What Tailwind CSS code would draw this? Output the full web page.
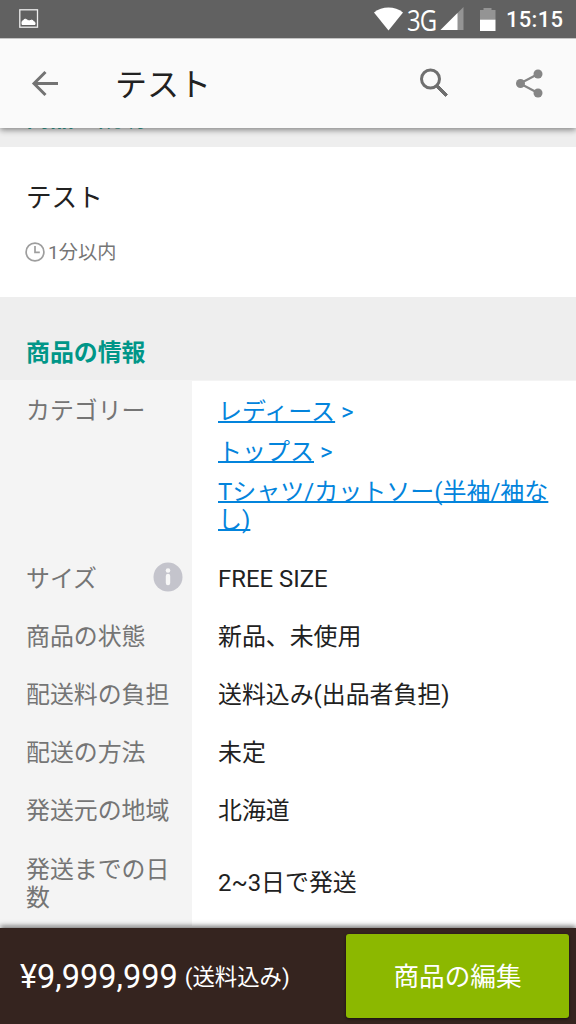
<!DOCTYPE html>
<html lang="ja">
<head>
<meta charset="utf-8">
<title>テスト</title>
<script src="https://cdn.jsdelivr.net/npm/@tailwindcss/browser@4"></script>
</head>
<body class="bg-white">
<div class="relative flex h-[1024px] w-[576px] flex-col overflow-hidden bg-white font-[Roboto,'Noto_Sans_CJK_JP',sans-serif] text-[23.900px] leading-[28px] text-[#212121]">
  <div class="z-20 flex h-[38px] shrink-0 items-center bg-[#616161] text-white">
    <svg class="ml-[19px] h-5 w-5" viewBox="0 0 20 20"><rect x=".8" y=".8" width="17.7" height="17.4" fill="none" stroke="#eee" stroke-width="1.3"/><path d="M3 15.5v-3l3-2.5 4 2 3-1 3 2.5v2z" fill="#fff" stroke="#fff" stroke-linejoin="round"/></svg>
    <svg class="ml-[334px] h-[38px] w-[30px] shrink-0" viewBox="373 0 30 38"><path d="M374 12.5C382 5.800 395 5.800 403 12.500L388.500 30.500z" fill="#fff"/></svg>
    <span class="ml-[4px] w-[31px] shrink-0 whitespace-nowrap pt-px font-['Open_Sans'] text-[28.500px] font-medium tracking-[-1px]"><span class="inline-block origin-left scale-x-[.84]">3G</span></span>
    <svg class="ml-[2px] h-[38px] w-[56px] shrink-0" viewBox="439.500 0 56 38"><path d="M463 7v23H440z" fill="#949494"/><path d="M457 13v17H440z" fill="#fff"/><path d="M483 8h8v2h4v10h-15.500V10h3.500z" fill="#949494"/><path d="M479.500 19.700H495V31h-15.500z" fill="#fff"/></svg>
    <span class="ml-[10px] pt-[2px] text-[22px] font-medium tracking-[.3px]">15:15</span>
  </div>
  <header class="z-10 flex h-[90px] shrink-0 items-center border-t border-[#c4c4c4] bg-[#fafafa] shadow-[0_2px_6px_rgba(0,0,0,.45)]">
    <svg class="ml-[31px] h-7 w-7 shrink-0" viewBox="31 69.500 28 28"><path d="M58 83H34M45.500 71.500L34 83l11.500 11.500" fill="none" stroke="#737373" stroke-width="3"/></svg>
    <h1 class="ml-[56px] w-[296px] pt-[2px] text-[32px] leading-[40px]">テスト</h1>
    <svg class="ml-[7px] h-8 w-8 shrink-0" viewBox="418 68 32 32"><circle cx="430.500" cy="79" r="9" fill="none" stroke="#6f6f6f" stroke-width="3"/><path d="M437 85.500l1.500 0 9 9-2 2-9-9v-1.500z" fill="#6f6f6f" stroke="#6f6f6f"/></svg>
    <svg class="ml-[64px] h-8 w-8 shrink-0" viewBox="514 67.500 32 32"><path d="M538 73.500L520 83l18 9.500" fill="none" stroke="#858585" stroke-width="2.200"/><g fill="#858585"><circle cx="520.500" cy="83" r="4.500"/><circle cx="538" cy="73.500" r="4.500"/><circle cx="538" cy="92.500" r="4.500"/></g></svg>
  </header>
  <main class="flex flex-1 flex-col">
    <div class="h-[19px] shrink-0 bg-[#eee] pl-[26px]"><h2 class="-mt-[24px] font-bold text-[#009688]">商品の説明</h2></div>
    <section class="h-[150px] shrink-0 bg-white pl-[25px] pt-[35px]">
      <p class="pl-px text-[25.600px] leading-[32px]">テスト</p>
      <p class="mt-[24px] flex items-center text-[19.200px] text-[#757575]"><svg class="-mt-[2px] mr-[3px] h-5 w-5" viewBox="0 0 20 20" fill="none" stroke="#9e9e9e"><circle cx="10" cy="10" r="8.900" stroke-width="1.700"/><path d="M10 4v6.300h4.800" stroke-width="1.700"/></svg><span class="pt-px">1分以内</span></p>
    </section>
    <h2 class="flex h-[83px] shrink-0 items-end bg-[#eee] pb-[13px] pl-[26px] font-bold text-[#009688]">商品の情報</h2>
    <dl class="grid grid-cols-[192px_1fr] grid-rows-[169px_repeat(5,58px)_86px] border-t border-[#f4f4f4] [&>dt]:flex [&>dt]:items-center [&>dt]:bg-[#f4f4f4] [&>dt]:pl-[26px] [&>dt]:text-[#757575] [&>dd]:flex [&>dd]:items-center [&>dd]:pl-[26px]">
      <dt class="items-start! pt-[16px]">カテゴリー</dt>
      <dd class="flex-col items-start! gap-[12px] pt-[17px] text-[24px] text-[#0384dc]">
        <p><a class="underline decoration-[1.500px] underline-offset-[1px] [text-decoration-skip-ink:none]">レディース</a> &gt;</p>
        <p><a class="underline decoration-[1.500px] underline-offset-[1px] [text-decoration-skip-ink:none]">トップス</a> &gt;</p>
        <p class="w-[336px]"><a class="underline decoration-[2px] underline-offset-[1px] [text-decoration-skip-ink:none]">Tシャツ/カットソー(半袖/袖な<br>し)</a></p>
      </dd>
      <dt>サイズ<svg class="-mt-[4px] ml-[56px] h-[30px] w-[30px]" viewBox="0 0 30 30"><circle cx="15" cy="15" r="14.500" fill="#c4c4cc"/><circle cx="15" cy="8.500" r="2.300" fill="#f7f7f7"/><path d="M15 14v7" stroke="#f7f7f7" stroke-width="4.400" stroke-linecap="round"/></svg></dt>
      <dd>FREE SIZE</dd>
      <dt>商品の状態</dt><dd>新品、未使用</dd>
      <dt>配送料の負担</dt><dd>送料込み(出品者負担)</dd>
      <dt>配送の方法</dt><dd>未定</dd>
      <dt>発送元の地域</dt><dd>北海道</dd>
      <dt class="pt-px">発送までの日<br>数</dt><dd>2~3日で発送</dd>
    </dl>
  </main>
  <footer class="absolute inset-x-0 bottom-0 flex h-[96px] items-center bg-[#35241f] pl-[20px] text-white shadow-[0_-2px_5px_rgba(0,0,0,.55)]">
    <span class="pt-[2px] text-[32.500px]">¥9,999,999</span>
    <span class="ml-[7px] pt-[2px] text-[22.400px]">(送料込み)</span>
    <button class="absolute left-[346px] top-[6px] flex h-[84px] w-[223px] items-center justify-center rounded-[3px] bg-[#8cb800] pt-[2px] text-[25.600px] shadow-[0_1px_3px_rgba(0,0,0,.6)]">商品の編集</button>
  </footer>
</div>
</body>
</html>
